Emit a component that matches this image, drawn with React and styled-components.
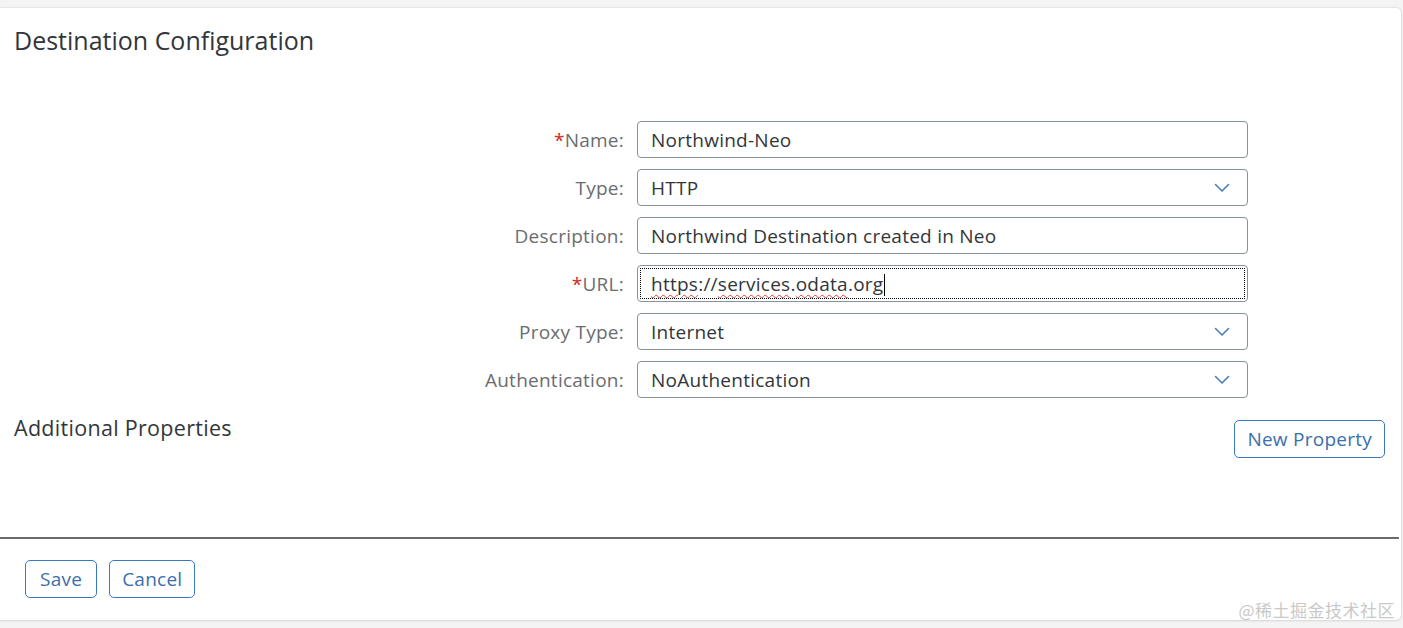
import React from "react";
import styled, { createGlobalStyle } from "styled-components";

const Global = createGlobalStyle`
  html, body { margin: 0; padding: 0; background: #f4f4f4; }
  body { font-family: "Open Sans", "Liberation Sans", Arial, sans-serif; color: #32363a; }
  * { box-sizing: border-box; }
`;

const Page = styled.div`
  padding: 8px 2px 8px 0;
  height: 628px;
`;

const Card = styled.div`
  position: relative;
  height: 612px;
  background: #fff;
  border-radius: 0 5px 5px 0;
  box-shadow: 0 0 2px rgba(0,0,0,0.18), 0 1px 3px rgba(0,0,0,0.08);
  display: flex;
  flex-direction: column;
`;

const Title = styled.h1`
  margin: 0;
  padding: 16px 0 0 14px;
  font-size: 25px;
  line-height: 32px;
  font-weight: 400;
  color: #32363a;
`;

const Form = styled.div`
  margin-top: 65px;
  display: grid;
  grid-template-columns: 610px 611px;
  grid-auto-rows: 37px;
  column-gap: 13px;
  row-gap: 11px;
  padding-left: 14px;
`;

const Label = styled.label`
  display: flex;
  align-items: center;
  justify-content: flex-end;
  font-size: 19px;
  letter-spacing: 0.25px;
  color: #6a6d70;
  white-space: nowrap;
`;

const Req = styled.span`
  color: #d1251f;
`;

const Field = styled.div`
  position: relative;
  display: flex;
  align-items: center;
  border: 1px solid #89919a;
  border-radius: 4px;
  padding: 0 13px;
  font-size: 19px;
  letter-spacing: 0.25px;
  color: #32363a;
  background: #fff;
  ${(p) => p.$focus && `
    &::after {
      content: "";
      position: absolute;
      inset: 2px;
      border: 1px dotted #000;
      border-radius: 1px;
      pointer-events: none;
    }
  `}
`;

const Value = styled.span`
  flex: 1;
  white-space: nowrap;
`;

const Misspelled = styled.span`
  text-decoration: underline wavy #e0413b;
  text-decoration-thickness: 1px;
  text-underline-offset: 3px;
`;

const Caret = styled.span`
  display: inline-block;
  width: 1px;
  height: 22px;
  background: #000;
  vertical-align: middle;
  margin-left: 1px;
`;

const Chevron = styled.svg`
  width: 16px;
  height: 10px;
  margin-right: 4px;
`;

const AdditionalRow = styled.div`
  margin-top: 14px;
  display: flex;
  justify-content: space-between;
  align-items: flex-start;
  padding: 0 16px 0 14px;
`;

const SubTitle = styled.h2`
  margin: 2px 0 0;
  font-size: 21.5px;
  letter-spacing: 0.3px;
  line-height: 28px;
  font-weight: 400;
  color: #32363a;
`;

const Button = styled.button`
  height: 38px;
  padding: 0 ${(p) => p.$pad || 12}px;
  margin-top: ${(p) => p.$top || 0}px;
  border: 1px solid #3a78c0;
  border-radius: 5px;
  background: #fff;
  color: #3a6fad;
  font-family: inherit;
  font-size: 19px;
  letter-spacing: 0.25px;
  cursor: pointer;
`;

const Spacer = styled.div`
  flex: 1;
`;

const Separator = styled.div`
  height: 2px;
  background: #6a6d70;
  margin-right: 2px;
`;

const Footer = styled.div`
  display: flex;
  gap: 12px;
  padding: 21px 0 22px 25px;
`;

const Watermark = styled.div`
  position: absolute;
  right: 6px;
  bottom: -2px;
  font-family: "Noto Sans CJK SC", sans-serif;
  font-size: 17px;
  color: #c9c9c9;
  letter-spacing: 0.5px;
`;

const ChevronIcon = () => (
  <Chevron viewBox="0 0 16 10">
    <path d="M1.5 1.5 L8 8 L14.5 1.5" fill="none" stroke="#4a7fb8" strokeWidth="1.6" strokeLinecap="round" strokeLinejoin="round" />
  </Chevron>
);

const rows = [
  { label: "Name:", required: true, value: "Northwind-Neo" },
  { label: "Type:", value: "HTTP", select: true },
  { label: "Description:", value: "Northwind Destination created in Neo" },
  { label: "URL:", required: true, url: true },
  { label: "Proxy Type:", value: "Internet", select: true },
  { label: "Authentication:", value: "NoAuthentication", select: true },
];

export default function App() {
  return (
    <Page>
      <Global />
      <Card>
        <Title>Destination Configuration</Title>
        <Form>
          {rows.map((r) => (
            <React.Fragment key={r.label}>
              <Label>
                {r.required && <Req>*</Req>}
                {r.label}
              </Label>
              <Field $focus={r.url}>
                <Value>
                  {r.url ? (
                    <>
                      <Misspelled>https</Misspelled>://<Misspelled>services</Misspelled>.<Misspelled>odata</Misspelled>.org
                      <Caret />
                    </>
                  ) : (
                    r.value
                  )}
                </Value>
                {r.select && <ChevronIcon />}
              </Field>
            </React.Fragment>
          ))}
        </Form>
        <AdditionalRow>
          <SubTitle>Additional Properties</SubTitle>
          <Button $top={8}>New Property</Button>
        </AdditionalRow>
        <Spacer />
        <Separator />
        <Footer>
          <Button $pad={14}>Save</Button>
          <Button>Cancel</Button>
        </Footer>
        <Watermark>@稀土掘金技术社区</Watermark>
      </Card>
    </Page>
  );
}
